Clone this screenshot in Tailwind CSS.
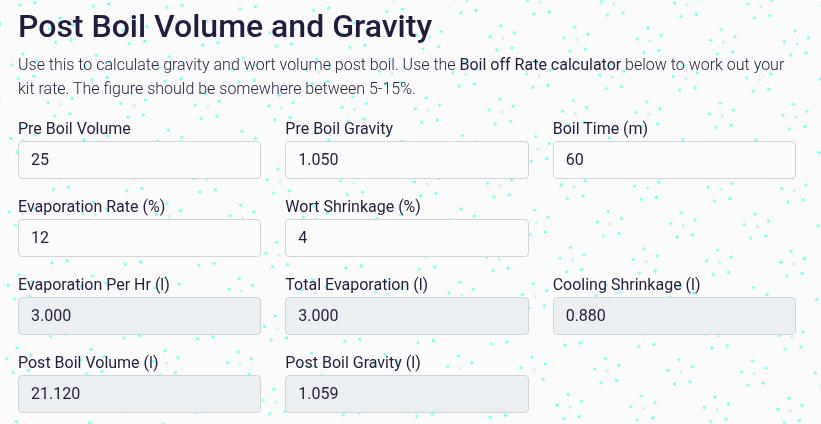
<!DOCTYPE html>
<html lang="en">
<head>
<meta charset="utf-8">
<meta name="viewport" content="width=device-width, initial-scale=1">
<title>Post Boil Volume and Gravity</title>
<script src="https://cdn.jsdelivr.net/npm/@tailwindcss/browser@4"></script>
</head>
<body class="bg-[#fbfbfb] font-[Roboto,'Liberation_Sans',sans-serif] text-base text-[#241c3c]">
<svg class="fixed inset-0 -z-10 h-full w-full" aria-hidden="true">
  <defs>
    <g id="cluster">
      <g fill="#80ffee">
        <circle cx="-2.2" cy="-12.7" r="1.6"/>
        <circle cx="11.3" cy="-5.9" r="1.6"/>
        <circle cx="-12.7" cy="-1.8" r="1.6"/>
        <circle cx="-6.1" cy="11.7" r="1.6"/>
        <circle cx="9.2" cy="9.2" r="1.7"/>
      </g>
      <circle r="1.6" fill="#c4f2ee"/>
    </g>
    <pattern id="dots" width="73.5" height="73.5" patternUnits="userSpaceOnUse" patternTransform="translate(704.5 97.5) rotate(1)">
      <use href="#cluster" x="18" y="18"/>
      <use href="#cluster" x="54.75" y="54.75"/>
    </pattern>
  </defs>
  <rect width="100%" height="100%" fill="url(#dots)"/>
</svg>
<main class="pt-[7px] pr-[25px] pb-3 pl-[18px]">
  <h1 class="mb-2 text-[32px] leading-[38px] font-medium">Post Boil Volume and Gravity</h1>
  <p class="mb-4 leading-6 font-light">Use this to calculate gravity and wort volume post boil. Use the <strong class="font-normal">Boil off Rate calculator</strong> below to work out your kit rate. The figure should be somewhere between 5-15%.</p>
  <form class="grid grid-cols-3 gap-x-6 gap-y-4">
    <div class="flex flex-col">
      <label for="pre-volume" class="leading-6">Pre Boil Volume</label>
      <input id="pre-volume" type="text" value="25" class="h-[38px] w-full rounded border border-[#ced4da] bg-[#fbfbfb] px-3 pb-0.5 leading-6">
    </div>
    <div class="flex flex-col">
      <label for="pre-gravity" class="leading-6">Pre Boil Gravity</label>
      <input id="pre-gravity" type="text" value="1.050" class="h-[38px] w-full rounded border border-[#ced4da] bg-[#fbfbfb] px-3 pb-0.5 leading-6">
    </div>
    <div class="flex flex-col">
      <label for="boil-time" class="leading-6">Boil Time (m)</label>
      <input id="boil-time" type="text" value="60" class="h-[38px] w-full rounded border border-[#ced4da] bg-[#fbfbfb] px-3 pb-0.5 leading-6">
    </div>
    <div class="flex flex-col">
      <label for="evap-rate" class="leading-6">Evaporation Rate (%)</label>
      <input id="evap-rate" type="text" value="12" class="h-[38px] w-full rounded border border-[#ced4da] bg-[#fbfbfb] px-3 pb-0.5 leading-6">
    </div>
    <div class="flex flex-col">
      <label for="wort-shrinkage" class="leading-6">Wort Shrinkage (%)</label>
      <input id="wort-shrinkage" type="text" value="4" class="h-[38px] w-full rounded border border-[#ced4da] bg-[#fbfbfb] px-3 pb-0.5 leading-6">
    </div>
    <div class="col-start-1 flex flex-col">
      <label for="evap-hour" class="leading-6">Evaporation Per Hr (l)</label>
      <input id="evap-hour" type="text" value="3.000" readonly class="h-[38px] w-full rounded border border-[#ced4da] bg-[#eceff2] px-3 pb-0.5 leading-6">
    </div>
    <div class="flex flex-col">
      <label for="evap-total" class="leading-6">Total Evaporation (l)</label>
      <input id="evap-total" type="text" value="3.000" readonly class="h-[38px] w-full rounded border border-[#ced4da] bg-[#eceff2] px-3 pb-0.5 leading-6">
    </div>
    <div class="flex flex-col">
      <label for="cooling" class="leading-6">Cooling Shrinkage (l)</label>
      <input id="cooling" type="text" value="0.880" readonly class="h-[38px] w-full rounded border border-[#ced4da] bg-[#eceff2] px-3 pb-0.5 leading-6">
    </div>
    <div class="flex flex-col">
      <label for="post-volume" class="leading-6">Post Boil Volume (l)</label>
      <input id="post-volume" type="text" value="21.120" readonly class="h-[38px] w-full rounded border border-[#ced4da] bg-[#eceff2] px-3 pb-0.5 leading-6">
    </div>
    <div class="flex flex-col">
      <label for="post-gravity" class="leading-6">Post Boil Gravity (l)</label>
      <input id="post-gravity" type="text" value="1.059" readonly class="h-[38px] w-full rounded border border-[#ced4da] bg-[#eceff2] px-3 pb-0.5 leading-6">
    </div>
  </form>
</main>
</body>
</html>
